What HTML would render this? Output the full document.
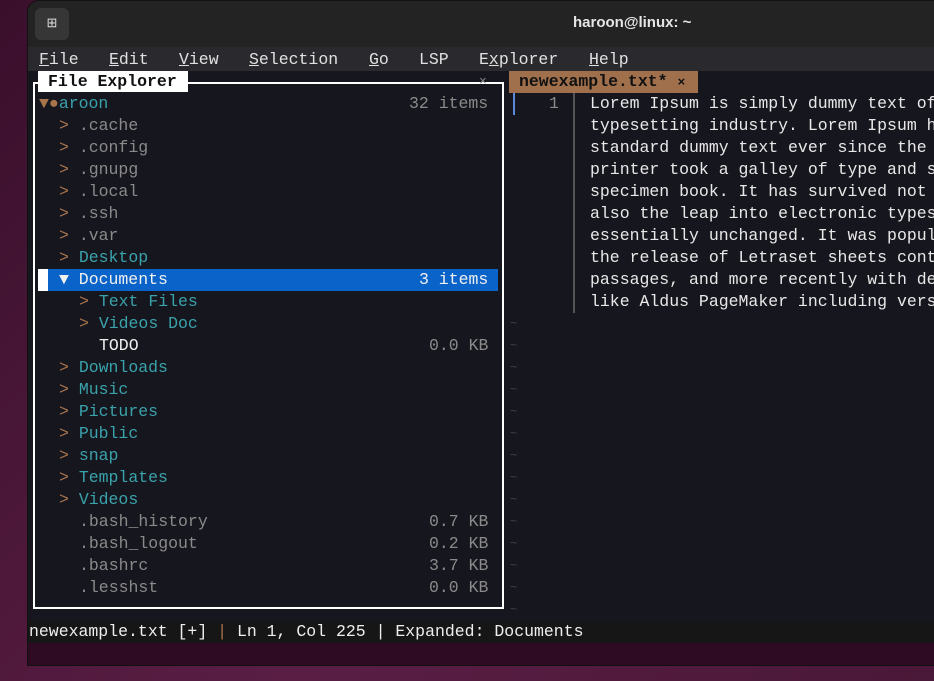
<!DOCTYPE html>
<html><head><style>
*{margin:0;padding:0;box-sizing:border-box}
body{width:934px;height:681px;overflow:hidden;background:linear-gradient(135deg,#3a0f2c,#5a1e44 60%,#4a1838);font-family:"Liberation Mono",monospace;position:relative}
.win{position:absolute;left:27px;top:0;width:920px;height:666px;background:#16161e;border-radius:12px 0 0 0;overflow:hidden;border:1px solid #111}
.title{position:absolute;left:0;top:0;width:100%;height:46px;background:#232323;}
.tbtn{position:absolute;left:7px;top:7px;width:34px;height:32px;background:#363636;border-radius:6px;color:#ddd;font-size:13px;text-align:center;line-height:32px}
.ttext{position:absolute;left:545px;top:13px;color:#e6e6e6;font:bold 15px "Liberation Sans",sans-serif}
.menu{position:absolute;left:0;top:46px;width:100%;height:24px;background:#2a2a2e;color:#e0e0e0;font-size:16.5px;line-height:26px}
.menu span{position:absolute}
.t{position:absolute;font-size:16.5px;white-space:pre;line-height:22px}
.box{position:absolute;left:5px;top:81px;width:471px;height:527px;border:2px solid #fff}
.lbl{position:absolute;left:10px;top:70px;width:150px;height:21px;background:#fff;color:#111;font-weight:bold;font-size:16.5px;line-height:22px;padding-left:10px}
.sel{position:absolute;left:10px;top:268px;width:460px;height:22px;background:#0a63c8}
.g{color:#8a8a8a}.c{color:#3aa2ab}.a{color:#a8744a}.w{color:#f0f0f0}
.tab{position:absolute;left:481px;top:70px;width:189px;height:22px;background:#a0704c;color:#111;font-weight:bold;font-size:16.5px;line-height:22px;padding-left:10px}
.status{position:absolute;left:0;top:620px;width:100%;height:22px;background:#161616;color:#eee;font-size:16.5px;line-height:22px;padding-left:1px;white-space:pre}
.bottom{position:absolute;left:0;top:642px;width:100%;height:24px;background:#2e0b22}
</style></head><body>
<div class="win">
<div class="title"><div class="tbtn">⊞</div><div class="ttext">haroon@linux: ~</div></div>
<div class="menu"><span style="left:11px"><u>F</u>ile</span><span style="left:81px"><u>E</u>dit</span><span style="left:151px"><u>V</u>iew</span><span style="left:221px"><u>S</u>election</span><span style="left:341px"><u>G</u>o</span><span style="left:391px">LSP</span><span style="left:451px">E<u>x</u>plorer</span><span style="left:561px"><u>H</u>elp</span></div>
<div class="box"></div>
<div class="lbl">File Explorer</div>
<div class="t g" style="left:451px;top:70px;font-size:13px">×</div>
<div class="sel"></div><div style="position:absolute;left:10px;top:268px;width:10px;height:22px;background:#fff"></div>
<div class="t" style="left:11px;top:92px"><span class="a">▼●</span><span class="c">aroon</span></div><div class="t g" style="left:381px;top:92px">32 items</div>
<div class="t" style="left:31px;top:114px"><span class="a">&gt;</span> <span class="g">.cache</span></div>
<div class="t" style="left:31px;top:136px"><span class="a">&gt;</span> <span class="g">.config</span></div>
<div class="t" style="left:31px;top:158px"><span class="a">&gt;</span> <span class="g">.gnupg</span></div>
<div class="t" style="left:31px;top:180px"><span class="a">&gt;</span> <span class="g">.local</span></div>
<div class="t" style="left:31px;top:202px"><span class="a">&gt;</span> <span class="g">.ssh</span></div>
<div class="t" style="left:31px;top:224px"><span class="a">&gt;</span> <span class="g">.var</span></div>
<div class="t" style="left:31px;top:246px"><span class="a">&gt;</span> <span class="c">Desktop</span></div>
<div class="t w" style="left:31px;top:268px">▼ Documents</div><div class="t w" style="left:391px;top:268px">3 items</div>
<div class="t" style="left:51px;top:290px"><span class="a">&gt;</span> <span class="c">Text Files</span></div>
<div class="t" style="left:51px;top:312px"><span class="a">&gt;</span> <span class="c">Videos Doc</span></div>
<div class="t w" style="left:71px;top:334px">TODO</div><div class="t g" style="left:401px;top:334px">0.0 KB</div>
<div class="t" style="left:31px;top:356px"><span class="a">&gt;</span> <span class="c">Downloads</span></div>
<div class="t" style="left:31px;top:378px"><span class="a">&gt;</span> <span class="c">Music</span></div>
<div class="t" style="left:31px;top:400px"><span class="a">&gt;</span> <span class="c">Pictures</span></div>
<div class="t" style="left:31px;top:422px"><span class="a">&gt;</span> <span class="c">Public</span></div>
<div class="t" style="left:31px;top:444px"><span class="a">&gt;</span> <span class="c">snap</span></div>
<div class="t" style="left:31px;top:466px"><span class="a">&gt;</span> <span class="c">Templates</span></div>
<div class="t" style="left:31px;top:488px"><span class="a">&gt;</span> <span class="c">Videos</span></div>
<div class="t g" style="left:51px;top:510px">.bash_history</div><div class="t g" style="left:401px;top:510px">0.7 KB</div>
<div class="t g" style="left:51px;top:532px">.bash_logout</div><div class="t g" style="left:401px;top:532px">0.2 KB</div>
<div class="t g" style="left:51px;top:554px">.bashrc</div><div class="t g" style="left:401px;top:554px">3.7 KB</div>
<div class="t g" style="left:51px;top:576px">.lesshst</div><div class="t g" style="left:401px;top:576px">0.0 KB</div>
<div class="tab">newexample.txt* <span style="font-size:13px">×</span></div>
<div style="position:absolute;left:485px;top:92px;width:2px;height:22px;background:#5a8ad8"></div>
<div class="t g" style="left:521px;top:92px">1</div>
<div style="position:absolute;left:545px;top:92px;width:2px;height:220px;background:#555"></div>
<div class="t" style="left:562px;top:92px;color:#e8e8e8">Lorem Ipsum is simply dummy text of
typesetting industry. Lorem Ipsum h
standard dummy text ever since the
printer took a galley of type and s
specimen book. It has survived not
also the leap into electronic types
essentially unchanged. It was popul
the release of Letraset sheets cont
passages, and more recently with de
like Aldus PageMaker including vers</div>
<div class="t" style="left:482px;top:312px;color:#444;font-size:12px;line-height:22px">~
~
~
~
~
~
~
~
~
~
~
~
~
~</div>
<div class="status">newexample.txt [+] <span class="a">|</span> Ln 1, Col 225 | Expanded: Documents</div>
<div class="bottom"></div>
</div>
</body></html>
